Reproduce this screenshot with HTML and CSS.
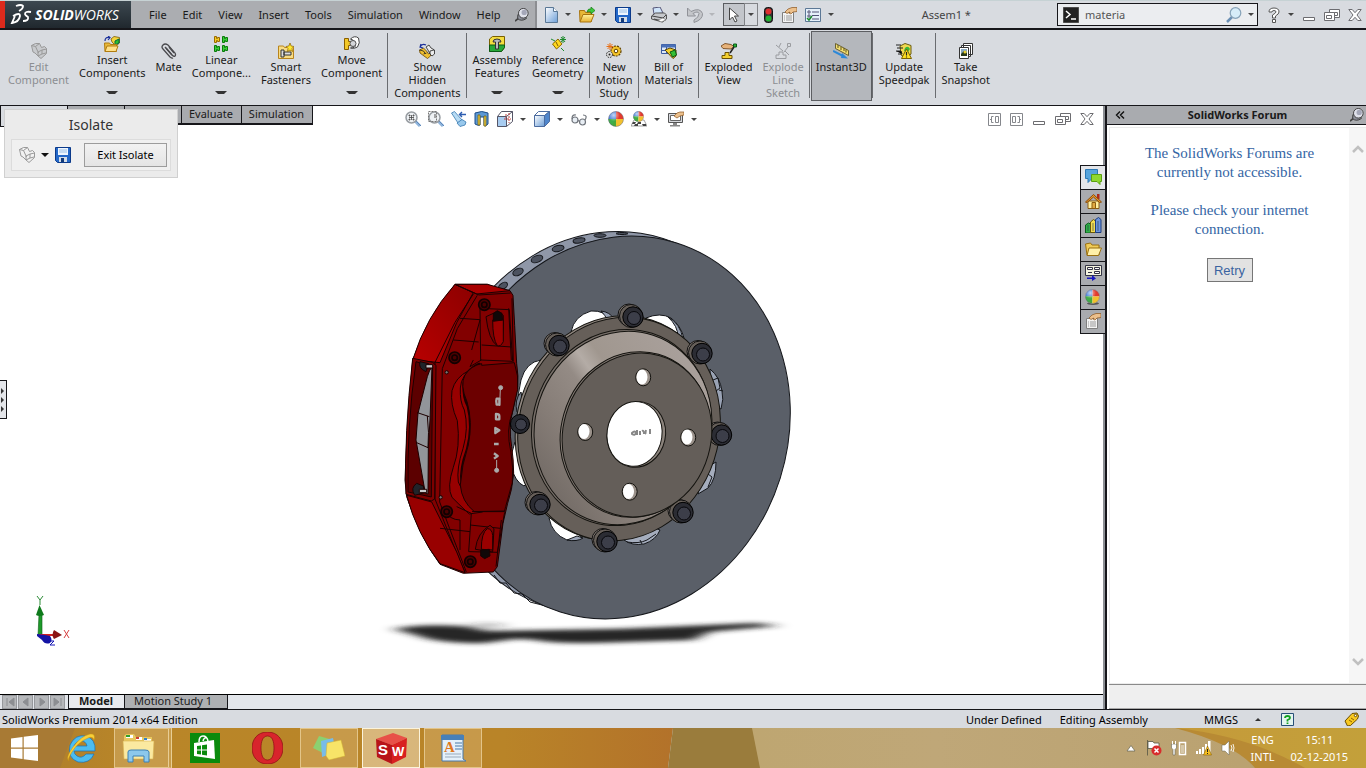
FILE: index.html
```html
<!DOCTYPE html>
<html lang="en">
<head>
  <meta charset="UTF-8" />
  <title>Assem1 - SolidWorks Premium 2014</title>
  <link rel="stylesheet" href="styles.css">
</head>
<body>

  <!-- Shared icons -->
  <svg class="defs" aria-hidden="true">
    <defs>
      <radialGradient id="gSphere" cx="35%" cy="25%" r="80%">
        <stop offset="0" stop-color="#fff" stop-opacity=".7"/><stop offset=".5" stop-color="#fff" stop-opacity="0"/>
      </radialGradient>
      <linearGradient id="gBlue" x1="0" y1="0" x2="1" y2="1">
        <stop offset="0" stop-color="#fff"/><stop offset="1" stop-color="#6d9fd8"/>
      </linearGradient>
      <linearGradient id="gGold" x1="0" y1="0" x2="0" y2="1">
        <stop offset="0" stop-color="#fff3a0"/><stop offset="1" stop-color="#e8b030"/>
      </linearGradient>
    </defs>
    <symbol id="pin" viewBox="0 0 16 16">
      <path d="M0 15l5-4" stroke="#444" stroke-width="2"/>
      <path d="M3 12q4 4 10 0l-1-3-6-5q-4 4-3 8z" fill="#8c8f9a" stroke="#333"/>
      <circle cx="9.500" cy="6" r="5.500" fill="#dfe1ea" stroke="#333"/>
      <circle cx="10.500" cy="5" r="3" fill="#a4a7b8"/>
    </symbol>
    <symbol id="floppy" viewBox="0 0 16 16">
      <path d="M.5.500h15v15h-13l-2-2z" fill="#2468c8" stroke="#0c3a8a"/>
      <path d="M3 1h10v7H3z" fill="#eef6ff"/><path d="M4 3h8M4 5h8" stroke="#9cc0e4"/>
      <path d="M4 10h8v5H4z" fill="#d4dde8"/><path d="M6 11h3v4H6z" fill="#123a7a"/>
    </symbol>
    <symbol id="hand" viewBox="0 0 16 16">
      <path d="M1.500 5.500h11v10h-11z" fill="#f4f4f4" stroke="#808080"/>
      <path d="M3 9h1M5 9h6M3 11h1M5 11h6M3 13h1M5 13h6" stroke="#999"/>
      <path d="M4 5l3-3 4-1.500h5v4l-4 .5-2 2-1.500-.5L9 5 6 6.500z" fill="#ecc08c" stroke="#8a5520" stroke-width=".7"/>
    </symbol>
    <symbol id="sphere" viewBox="0 0 16 16">
      <circle cx="8" cy="8" r="7.500" fill="#fff"/>
      <path d="M8 8V.5A7.500 7.500 0 0 0 .5 8z" fill="#3c78d8"/>
      <path d="M8 8V.5A7.500 7.500 0 0 1 15.500 8z" fill="#e23a2e"/>
      <path d="M8 8H.5A7.500 7.500 0 0 0 8 15.500z" fill="#48a83a"/>
      <path d="M8 8h7.500A7.500 7.500 0 0 1 8 15.500z" fill="#f2c12e"/>
      <path d="M8 8H.5A7.500 7.500 0 0 0 4 14.300z" fill="#3fae4a"/>
      <circle cx="8" cy="8" r="7.500" fill="url(#gSphere)" stroke="#667" stroke-width=".5"/>
    </symbol>
    <symbol id="part" viewBox="0 0 16 16">
      <path d="M.5 2.500l4-2h4l2 4 3-1 2 2v5L10 15.500 7 13l-3-3-2-1z" fill="currentColor" stroke="#999"/>
      <path d="M.5 2.500l4 1 3 6.500M4.500 3.500l4-3M7 13V9l4-2 4.500-1M11 7v4l-4 2M11 11l4-1" fill="none" stroke="#999"/>
    </symbol>
    <symbol id="win-min" viewBox="0 0 14 14">
      <path d="M1.500 9.500h11v3h-11z" fill="#fff" stroke="#6c6c70"/>
    </symbol>
    <symbol id="win-restore" viewBox="0 0 16 14">
      <path d="M5.500 1.500h10v8h-10z" fill="#fff" stroke="#6c6c70"/><path d="M7.500 4.500h6v3h-6z" fill="none" stroke="#6c6c70"/>
      <path d="M.5 4.500h10v8H.5z" fill="#fff" stroke="#6c6c70"/><path d="M2.500 7.500h5v3h-5z" fill="none" stroke="#6c6c70"/>
    </symbol>
    <symbol id="win-close" viewBox="0 0 14 14">
      <path d="M.8 1.500h3.400L7 4.700l2.800-3.200h3.400L9 7l4.200 5.500H9.800L7 9.300l-2.800 3.200H.8L5 7z" fill="#fff" stroke="#6c6c70"/>
    </symbol>
    <symbol id="lens" viewBox="0 0 16 16">
      <path d="M10 10l5 5" stroke="#8fb4dc" stroke-width="3"/><path d="M11 10l5 5" stroke="#5d88ba"/>
      <circle cx="6.500" cy="6.500" r="5.500" fill="#eef1f4" stroke="#989da2" stroke-width="1.500"/>
    </symbol>
  </svg>

  <header class="titlebar">
    <div class="logo">
      <svg width="24" height="22" viewBox="0 0 24 22" aria-hidden="true">
        <g fill="none" stroke="#fff" stroke-width="1.800">
          <path d="M7 2q5-2 7 0 0 3-4 5"/>
          <path d="M4 12q7-4 7 0-1 6-8 7l3-7"/>
          <path d="M22 8q-6-1-6 2 0 1 3 3 1 4-5 4"/>
        </g>
      </svg>
      <span class="brand"><b>SOLID</b>WORKS</span>
    </div>
    <nav class="menu">
      <a href="#">File</a><a href="#">Edit</a><a href="#">View</a><a href="#">Insert</a><a href="#">Tools</a><a href="#">Simulation</a><a href="#">Window</a><a href="#">Help</a>
      <svg class="pin" width="14" height="14"><use href="#pin"/></svg>
    </nav>
    <div class="quick">
      <button aria-label="New"><svg width="16" height="16" viewBox="0 0 16 16"><path d="M2.500.5h8l4 4v11h-12z" fill="url(#gBlue)" stroke="#5a7896"/><path d="M10.500.5v4h4" fill="#fff" stroke="#5a7896"/></svg></button><i class="arrow"></i>
      <button aria-label="Open"><svg width="16" height="16" viewBox="0 0 16 16"><path d="M.5 3.500h5l1 2h6v9H1z" fill="#e8b838" stroke="#a87410"/><path d="M4 7.500h11l-3 7.500H1z" fill="url(#gGold)" stroke="#a87410"/><path d="M8 5q1-4 4-3V0l4 3.500L12 7V5q-2-1-4 0z" fill="#3cc83c" stroke="#157a15" stroke-width=".7"/></svg></button><i class="arrow"></i>
      <button aria-label="Save"><svg width="16" height="16"><use href="#floppy"/></svg></button><i class="arrow"></i>
      <button aria-label="Print"><svg width="16" height="16" viewBox="0 0 16 16"><path d="M3 7L2 1l7-1 3 6z" fill="#cfe4fa" stroke="#557"/><path d="M.5 9l4-3h9l2 2v4l-4 3-11-3z" fill="#c6c8cc" stroke="#555"/><path d="M1 9l11 2 3-3M3 12l8 2v-2" fill="none" stroke="#444"/><path d="M7 13l5-2 3 2-5 2z" fill="#fff" stroke="#666" stroke-width=".6"/></svg></button><i class="arrow"></i>
      <button aria-label="Undo"><svg width="16" height="16" viewBox="0 0 16 16"><path d="M.5 1v8h8L6 6.500q5-3 6 0 0 4-5 6.500v2.500q9-3 8.500-9Q13 0 4 4.500z" fill="#c4c6ca" stroke="#909298"/></svg></button><i class="arrow pale"></i>
      <button class="pick" aria-label="Select"><svg width="12" height="16" viewBox="0 0 12 16"><path d="M1.500 1v12l3-3 2.500 5 2-1-2.500-5h4z" fill="#fff" stroke="#444"/></svg></button><button class="pick-more" aria-label="Select options"><i class="arrow"></i></button>
      <button aria-label="Rebuild"><svg width="10" height="16" viewBox="0 0 10 16"><rect x=".5" y=".5" width="8" height="15" rx="3" fill="#333" stroke="#111"/><circle cx="4.500" cy="4.500" r="3" fill="#e03030"/><circle cx="4.500" cy="11.500" r="3" fill="#22b032"/></svg></button>
      <button class="wide" aria-label="File properties"><svg width="16" height="16"><use href="#hand"/></svg></button>
      <button class="wide" aria-label="Options"><svg width="16" height="16" viewBox="0 0 16 16"><path d="M.5 1.500h15v13H.5z" fill="#e6f0fa" stroke="#5c7896"/><path d="M3 4h2v2H3zM3 8h2v2H3z" fill="#fff" stroke="#557"/><path d="M7 5h7M7 8.500h7M7 12h7" stroke="#557"/><path d="M2 11l2 2 3-4" fill="none" stroke="#1a8a2a" stroke-width="1.500"/></svg></button><i class="arrow"></i>
    </div>
    <div class="doc-title">Assem1 *</div>
    <div class="search">
      <svg width="16" height="16" viewBox="0 0 16 16"><path d="M0 0h16v16H0z" fill="#222" stroke="#777"/><path d="M3 4l4 3.500L3 11M8 12h5" fill="none" stroke="#fff" stroke-width="1.500"/></svg>
      <input type="text" id="search" value="materia" aria-label="Search commands" />
      <svg width="16" height="16" viewBox="0 0 16 16"><path d="M1 15l5-5" stroke="#6a8fb4" stroke-width="2.500"/><circle cx="9.500" cy="6" r="5.300" fill="#d6ecf8" stroke="#86a2b8" stroke-width="1.200"/></svg>
      <i class="arrow"></i>
    </div>
    <div class="window-controls">
      <button aria-label="Help"><svg width="12" height="16" viewBox="0 0 12 16"><path d="M1 5q0-4 5-4t5 4q0 2-3.500 4v2h-3V8Q8 6 8 5 8 3.500 6 3.500T4 5z" fill="#fff" stroke="#555"/><path d="M4.500 12.500h3v3h-3z" fill="#fff" stroke="#555"/></svg></button>
      <i class="arrow"></i>
      <button aria-label="Minimize"><svg width="14" height="14"><use href="#win-min"/></svg></button>
      <button aria-label="Restore"><svg width="16" height="14"><use href="#win-restore"/></svg></button>
      <button aria-label="Close"><svg width="14" height="14"><use href="#win-close"/></svg></button>
    </div>
  </header>

  <div class="ribbon">
    <button class="tool" disabled><svg class="gray" width="16" height="16"><use href="#part"/></svg>Edit<br>Component</button>
    <button class="tool drop"><svg width="16" height="16" viewBox="0 0 16 16"><path d="M7 3l3-2.500 5.500 1V7L12 10 8 6z" fill="#f3d43a" stroke="#7a5a00" stroke-width=".8"/><path d="M11 5l4-2v4l-4 2z" fill="#2fc02f" stroke="#064"/><path d="M.5 7h5l1 1.500h6v7H1z" fill="#e9b93a" stroke="#b07c10"/><path d="M3 10h11l-2 5.500H1z" fill="#ffe088" stroke="#b07c10"/><path d="M1 5q0-4 4-3.500M4 0l2 1.500L4 4" fill="none" stroke="#1a2f9a" stroke-width="1.200"/></svg>Insert<br>Components</button>
    <button class="tool"><svg width="16" height="16" viewBox="0 0 16 16"><g fill="none" stroke="#4a4a4e" stroke-width="1.300"><path d="M5 5l6 7q2 2 3 1t0-3L7 2Q4 0 2 2t0 4l7 8q2 1.500 3 1"/><path d="M4 4l7 8M8 4l5 6"/></g></svg>Mate</button>
    <button class="tool drop"><svg width="16" height="16" viewBox="0 0 16 16"><g fill="#38d038" stroke="#0a7a0a"><path id="jig" d="M9.500.500h2v2h1v-1h2v4h-2v-1h-1v2h-2z"/><use href="#jig" y="9"/><use href="#jig" x="-8" y="9"/><path d="M1.500.500h2v2h1v-1h2v4h-2v-1h-1v2h-2z" fill="#f4cc20" stroke="#9a6a00"/></g></svg>Linear<br>Compone...</button>
    <button class="tool"><svg width="16" height="16" viewBox="0 0 16 16"><path d="M.5 3h5l1 1.500h9v11H.5z" fill="#f8dc84" stroke="#b8841c"/><path d="M3 7h3v7H3zM6 9h7v3H6z" fill="#ddd" stroke="#333"/><path d="M12 0l1.200 3 2.800.5-2 2 .5 3-2.500-1.500L9.500 8.500l.5-3-2-2 2.800-.5z" fill="#ffe830" stroke="#8a5c00" stroke-width=".7"/></svg>Smart<br>Fasteners</button>
    <button class="tool drop"><svg width="16" height="16" viewBox="0 0 16 16"><path d="M.5 2.500h4v3h3v4h-3v4h-4z" fill="#f4c828" stroke="#8a5e00"/><path d="M6.500 3q4-4 8-1 2 5-1 9-3 2-7 1 5 0 5-3 1-4-5-6z" fill="#fff" stroke="#444"/><circle cx="9" cy="7.500" r="3" fill="#d4d6da" stroke="#555"/></svg>Move<br>Component</button>
    <hr>
    <button class="tool"><svg width="16" height="16" viewBox="0 0 16 16"><path d="M.5 7l4-2 3 3 2 3 2-1v3l-3 2.500L5 13 1 10z" fill="#f0c030" stroke="#6b4800" stroke-width=".8"/><path d="M7 4l3-2 2 3 3.500 2v4L13 13l-2-2-2-4z" fill="#ececec" stroke="#222" stroke-width=".8"/><path d="M.5 7l4 1 2 3M11 8l4-1M11 8v3M4.500 11l3-1" fill="none" stroke="#222" stroke-width=".8"/><path d="M1 4q2-4 6-2M2 1L1 4l3 1" fill="none" stroke="#1a2f9a" stroke-width="1.200"/></svg>Show<br>Hidden<br>Components</button>
    <hr>
    <button class="tool drop"><svg width="16" height="16" viewBox="0 0 16 16"><path d="M.5 3l3-2.500h12v11l-3 4H.5z" fill="#f4dc40" stroke="#7a6000"/><path d="M.5 9h15v2.500l-3 4H.5z" fill="#28a838" stroke="#0a5a16"/><path d="M4 6q0-3 4-3t4 3H9.500v7h-3V6z" fill="#b8bac0" stroke="#333"/></svg>Assembly<br>Features</button>
    <button class="tool drop"><svg width="16" height="16" viewBox="0 0 16 16"><path d="M2.500 8L8 3l4 5-5.500 5z" fill="#ffd820" stroke="#8a6a00"/><path d="M1 3l4 2M11 12l3 3M10 3.500h6M13 0v7M11 1l4 5M15 1l-4 5" stroke="#1c8a2c"/><path d="M6 6l2 4" stroke="#805c00"/></svg>Reference<br>Geometry</button>
    <hr>
    <button class="tool"><svg width="16" height="16" viewBox="0 0 16 16"><circle cx="10" cy="8" r="5" fill="#f4c428" stroke="#5e4000" stroke-width="1.200" stroke-dasharray="2 1"/><circle cx="10" cy="8" r="1.800" fill="#fff" stroke="#5e4000"/><circle cx="3.500" cy="11.500" r="3" fill="#ddd" stroke="#222" stroke-dasharray="1.500 1"/><circle cx="3.500" cy="11.500" r="1" fill="#222"/><path d="M4 0v7M.5 3.500h7M1.500 1l5 5M6.500 1l-5 5" stroke="#e87018"/></svg>New<br>Motion<br>Study</button>
    <hr>
    <button class="tool"><svg width="16" height="16" viewBox="0 0 16 16"><path d="M.5 1.500h14v9H.5z" fill="#dce8fa" stroke="#3c5ca0"/><path d="M.5 1.500h14v3H.5z" fill="#4a70b8"/><path d="M1 7.500h5M5.500 4v6" stroke="#3c5ca0"/><path d="M4 7l5-2 6 2v6l-3 2.500z" fill="#f4d030" stroke="#5a4400"/><path d="M9 9l5-2 1.500 5-4 2z" fill="#34c034" stroke="#0a5a16"/></svg>Bill of<br>Materials</button>
    <hr>
    <button class="tool"><svg width="16" height="16" viewBox="0 0 16 16"><path d="M0 3l4-2.500 6 1 3 2-3 2.500-8-.5z" fill="#e6b27a" stroke="#6b3e10" stroke-width=".8"/><path d="M12.500 1h3v3h-3z" fill="#28b438" stroke="#0a5a16"/><path d="M13 4l-4 6" stroke="#222" stroke-width="1.500"/><path d="M4 9.500h4v3h3v3H1v-3h3z" fill="#f4d030" stroke="#6b5000"/></svg>Exploded<br>View</button>
    <button class="tool" disabled><svg width="16" height="16" viewBox="0 0 16 16"><g fill="none" stroke="#9a9ca0"><path d="M4 9h4v3h3v3.500H1V12h3zM12.500.5h3v3h-3zM13 4L9 9M1 2l7 6M6 0l-2 4M10 8l4 4"/></g></svg>Explode<br>Line<br>Sketch</button>
    <hr>
    <button class="tool pressed"><svg width="16" height="16" viewBox="0 0 16 16"><path d="M2.500.5l13 7v5l-13-7z" fill="#f4e070" stroke="#6a6030"/><path d="M5 2v3M8 4v3M11 5v3M13 6.500v3" stroke="#5a5020"/><path d="M0 8l10 5" stroke="#2c88d8" stroke-width="2"/><path d="M9 10l6 5.500-7-.5z" fill="#2c88d8"/></svg>Instant3D</button>
    <hr>
    <button class="tool"><svg width="16" height="16" viewBox="0 0 16 16"><path d="M4 3l5-2.500 6 2V11l-5 4-5-3z" fill="#f0d850" stroke="#6a5c10"/><path d="M9 5q3-3 5 1l-2 3-4-1z" fill="#38b838"/><path d="M0 2h5M1 5h6M0 8h5l1 3M2 11h4" stroke="#222"/><path d="M10.500 6l5 9.500h-10z" fill="#ffe020" stroke="#7a6000"/><path d="M10.500 9v3.500M10.500 13.500v1" stroke="#222" stroke-width="1.200"/></svg>Update<br>Speedpak</button>
    <hr>
    <button class="tool"><svg width="16" height="16" viewBox="0 0 16 16"><path d="M5.500.5h9v11h-9zM3.500 2.500h9v11h-9z" fill="#fff" stroke="#333"/><path d="M1.500 4.500h9v11h-9z" fill="#fff" stroke="#333"/><path d="M3 6h6v7H3z" fill="#88a8c0"/><path d="M3 11l3-3 3 2v3H3z" fill="#2a3a1a"/><circle cx="7" cy="9" r="1.500" fill="#e8d030"/></svg>Take<br>Snapshot</button>
  </div>

  <main>
    <section class="workspace">
      <div class="viewport">
        <!-- Brake disc, hub and caliper -->
        <svg class="model" width="500" height="500" viewBox="302 150 500 500" role="img" aria-label="Brake assembly">
          <defs>
            <filter id="soft" x="-20%" y="-150%" width="140%" height="400%"><feGaussianBlur stdDeviation="22 6"/></filter>
            <linearGradient id="cone" x1="0" y1="0.9" x2="0.6" y2="0">
              <stop offset="0" stop-color="#6c6560"/><stop offset=".3" stop-color="#857c76"/><stop offset=".52" stop-color="#948b85"/>
              <stop offset=".6" stop-color="#b4aca6"/><stop offset=".68" stop-color="#a0978f"/><stop offset="1" stop-color="#a89f9a"/>
            </linearGradient>
            <linearGradient id="redTop" x1="0" y1="1" x2="1" y2="0">
              <stop offset="0" stop-color="#b80000"/><stop offset="1" stop-color="#8c0000"/>
            </linearGradient>
            <g id="bolt">
              <circle cx="-4" cy="-2" r="11" fill="#857c75" stroke="#111"/>
              <circle cx="-2" cy="-1" r="11.500" fill="#665f59" stroke="#111"/>
              <circle r="10.200" fill="#2b2c33" stroke="#000"/>
              <circle cx="1" cy="1" r="6.500" fill="#3c3e49" stroke="#08080c"/>
            </g>
          </defs>

          <g transform="translate(350 560) scale(.3333)">
            <g filter="url(#soft)" fill="#262626">
              <path d="M130 207q80-18 215-8l70 14 400-7 400-17 75 8-210 18-50 25-270 8q-160 4-200-8l-60-4-100 14q-140 0-200-24z"/>
              <path d="M340 194q80-10 140 2l-60 6z" opacity=".4"/>
            </g>
          </g>

          <!-- rotor -->
          <g stroke="#14161a">
            <ellipse cx="605" cy="422.500" rx="169.500" ry="193" transform="rotate(17.500 605 422.500)" fill="#8f97a8"/>
            <g fill="#4c525f">
              <ellipse cx="503" cy="286" rx="5" ry="3" transform="rotate(-35 503 286)"/>
              <ellipse cx="518" cy="272" rx="5.500" ry="3.300" transform="rotate(-25 518 272)"/>
              <ellipse cx="537" cy="259" rx="6" ry="3.300" transform="rotate(-20 537 259)"/>
              <ellipse cx="558" cy="248.500" rx="6" ry="3" transform="rotate(-12 558 248)"/>
              <ellipse cx="579" cy="240.500" rx="6" ry="2.500" transform="rotate(-8 579 240)"/>
              <ellipse cx="600" cy="235.500" rx="6" ry="1.800"/>
              <ellipse cx="622" cy="233.500" rx="6" ry="1"/>
            </g>
            <path d="M494 575l6 8 6 0 8 10 8 1 8 8 16 4" fill="none"/>
            <ellipse cx="618.500" cy="427.500" rx="169.500" ry="193.500" transform="rotate(17.500 618.500 427.500)" fill="#5a5f68"/>
          </g>

          <!-- windows behind the hub -->
          <g stroke="#14161a" fill="#fff">
            <path d="M571 332q3-16 20-21 14-1 20 10v16h-40z"/>
            <path d="M601 311q9 1 13 8l-6 2q-3-6-7-10z" fill="#9aa3b5"/>
            <path d="M646 318q14-6 25 0 10 8 13 20l-20 8z"/>
            <path d="M668 317q12 6 15 22l-5-2q0-11-10-20z" fill="#9aa3b5"/>
            <path d="M541 360q-15 2-20 20-4 14-2 26l12 6z"/>
            <path d="M521 392q-7 8-4 20l8 4z" fill="#78818f"/>
            <path d="M515 442q-5 12-4 24 4 16 13 20l6-6z"/>
            <path d="M549 518q3 16 18 22 8 2 14-3l-10-20z"/>
            <path d="M567 540q10 2 16-2l-6-2z" fill="#9aa3b5"/>
            <path d="M624 540q8 6 20 4 12-4 16-14l-20-8z" fill="#a5adbd"/>
            <path d="M627 542q12 2 20-2l9-6M640 540l2 4" fill="none"/>
            <path d="M710 369q10 8 12 22 2 8-1 18l-10-4z" fill="#9aa3b5"/>
            <path d="M713 380l5-2 2 10-4 3M719 390l4 1" fill="none"/>
            <path d="M716 462q0 18-8 26l-10 6 4-24z" fill="#a5adbd"/>
            <path d="M708 474l4 3-4 10" fill="none"/>
          </g>

          <!-- flange with bolts -->
          <g stroke="#14130f">
            <ellipse cx="616.500" cy="428" rx="100" ry="113.500" transform="rotate(18 616.500 428)" fill="#8f867f"/>
            <ellipse cx="619" cy="429" rx="100" ry="113" transform="rotate(18 619 429)" fill="#665f59"/>
            <use href="#bolt" x="633" y="317"/><use href="#bolt" x="702" y="353.500"/><use href="#bolt" x="721.500" y="435"/>
            <use href="#bolt" x="683" y="512.500"/><use href="#bolt" x="607" y="541.500"/><use href="#bolt" x="540" y="504.500"/>
            <use href="#bolt" x="559" y="345.500"/>
            <ellipse cx="621.500" cy="427.500" rx="89" ry="99" transform="rotate(18 621.500 427.500)" fill="#776f69"/>
            <ellipse cx="623" cy="428" rx="88" ry="97.500" transform="rotate(18 623 428)" fill="url(#cone)"/>
            <ellipse cx="635.500" cy="434.500" rx="74.500" ry="83.500" transform="rotate(16 635.500 434.500)" fill="#857c76"/>
            <ellipse cx="637" cy="435" rx="74" ry="82.500" transform="rotate(16 637 435)" fill="#645e59"/>
            <ellipse cx="636.500" cy="434.300" rx="29" ry="33" transform="rotate(12 636 434)" fill="#8b837c"/>
            <ellipse cx="634.500" cy="433.800" rx="27.500" ry="32.500" transform="rotate(8 634 434)" fill="#fff"/>
            <g fill="#9a918a">
              <ellipse cx="643.200" cy="377.300" rx="7.500" ry="8.500"/><ellipse cx="585.200" cy="432" rx="7.500" ry="8.500"/>
              <ellipse cx="688.200" cy="437.500" rx="7.500" ry="8.500"/><ellipse cx="629.700" cy="491.700" rx="7.500" ry="8.500"/>
            </g>
            <g fill="#fff" stroke="none">
              <ellipse cx="642" cy="377" rx="5.500" ry="7.500"/><ellipse cx="584" cy="431.500" rx="5.500" ry="7.500"/>
              <ellipse cx="687" cy="437" rx="5.500" ry="7.500"/><ellipse cx="628.500" cy="491.500" rx="5.500" ry="7.500"/>
            </g>
            <path d="M632 433q3-3 4 0-1 3-4 1zM637 430v5M640 431v4M642 431q2-1 2 3M646 430q-1 3 0 4M650 429v5" stroke="#888" stroke-width="2" fill="none"/>
          </g>

          <!-- caliper -->
          <g transform="translate(390 220) scale(.3333)" stroke="#1c0000" stroke-width="3" stroke-linejoin="round">
            <path d="M195 193h97l26 12 42 7 9 14 5 90 6 114q6 40 3 70l-14 70q-14 50-4 110 6 40 6 80-4 50-18 90l-14 60-17 130-12 16-90 4-70-27q-60-80-100-203l-5-50 5-120 18-240q40-110 127-227z" fill="#820000"/>
            <path d="M195 193l55 25-50 90-50 120-82-8q40-130 127-227z" fill="url(#redTop)"/>
            <path d="M195 193h97l68 19-100 10z" fill="#a80000"/>
            <path d="M195 193l72 32 95-6M250 222l-55 85-60 120v410l60 150 30 70M262 226l-60 100-45 120-8 400 30 80 50 130" fill="none"/>
            <path d="M50 826l75 20 75 150 25 62-75-27q-70-90-100-205z" fill="#980000"/>
            <path d="M68 415l60 12 10 10-4 400-10 6-76-20q-6-180 20-408z" fill="#7c0000"/>
            <path d="M78 425l50 16-4 390-70-15q-4-200 24-391z" fill="#5c0000"/>
            <path d="M126 440q-8 10-14 30l-28 110-6 80 28 160 8 2 1-140 5-82z" fill="#92959a"/>
            <path d="M82 578l36 12M80 668l36 16M112 588q6 50 2 96" fill="none"/>
            <path d="M90 425q-6 20 18 30l8-24zM80 790q-20 14-6 36l30-8-4-20z" fill="#20242a"/>
            <path d="M108 434h20v10h-20zM88 808h22v10H88z" fill="#c8cacd"/>

            <!-- inner lobed cover -->
            <path d="M270 430l-34 22q-40 20-50 60-6 40 16 90 10 80-12 140-20 60-4 90 40 40 52 50l40-6z" fill="#980000"/>
            <path d="M270 432q-46 20-48 60-2 40 12 66 16 60-2 130-22 60-16 100 16 46 38 70" fill="none" stroke-width="9"/>
            <path d="M255 440q-42 24-44 64-2 40 12 66 14 54-4 116-20 60-14 100 16 40 36 62" fill="none"/>
            <path d="M275 436l98-8q14 40 10 80l-16 70q-20 50-4 120 8 46 4 90l-20 72-4 15h-90q-38-30-42-80 4-60 24-120 14-70-4-130-22-50-6-80 18-28 50-34z" fill="#6c0000"/>
            <path d="M270 265l88 4 10 155-96-4zM275 375l90 6M210 295l60 4M190 360l76 6M245 390l25-90M250 420l-10 20 34-20" fill="none"/>
            <path d="M288 290q8 70 34 88 22-20 18-92l-16-12z" fill="#7a0000"/>
            <path d="M308 300h32v65q-8 16-18 12-14-20-14-77z" fill="#9a0000"/>
            <path d="M310 280l12-8 14 8 2 20-28 4z" fill="#100808"/>
            <path d="M246 875l100-2M244 880l-8 115 86 2 22-120M240 915l90 10M150 925l90 10M200 860l44 20M160 870q20 30 50 30v90" fill="none"/>
            <path d="M256 988q6-50 44-72l12 10-4 70z" fill="#7a0000"/>
            <path d="M274 988q0-50 18-62 14 0 16 20v44z" fill="#9a0000"/>
            <path d="M272 990l26-2 2 20-16 8-12-8z" fill="#100808"/>
            <path d="M366 235l4 190M356 265l8 155M334 900l-16 140" fill="none"/>

            <!-- screws -->
            <g fill="#4a0000" stroke="#120000" stroke-width="5">
              <circle cx="283" cy="254" r="17"/><circle cx="194" cy="413" r="17"/><circle cx="170" cy="875" r="17"/><circle cx="241" cy="1025" r="17"/>
              <circle cx="283" cy="254" r="8"/><circle cx="194" cy="413" r="8"/><circle cx="170" cy="875" r="8"/><circle cx="241" cy="1025" r="8"/>
            </g>
            <circle cx="170" cy="457" r="5" fill="#777"/><circle cx="152" cy="832" r="5" fill="#777"/>
            <!-- badge on the cover -->
            <g stroke="#aaa" fill="#aaa">
              <circle cx="332" cy="503" r="6"/><circle cx="320" cy="751" r="6"/>
              <path d="M331 508l-2 50M320 746v-26"/>
              <path d="M320 536h8v18h-8q-3-10 0-18zM318 582q10 0 10 6v10h-10zM316 624l12 7-12 8zM312 672h14M312 700l11 8-11 8" fill="none" stroke-width="7"/>
            </g>
          </g>
          <circle cx="520" cy="424" r="9.500" fill="#25272e" stroke="#000"/><circle cx="521" cy="424.500" r="5.500" fill="#3c3e49" stroke="#08080c"/>
        </svg>

        <nav class="command-tabs" aria-label="Command tabs">
          <button class="active" aria-label="Assembly"></button><button aria-label="Layout"></button><button aria-label="Sketch"></button><button>Evaluate</button><button>Simulation</button>
        </nav>

        <div class="isolate">
          <h2>Isolate</h2>
          <div class="isolate-row">
            <svg class="white" width="16" height="16"><use href="#part"/></svg><i class="arrow big"></i>
            <svg width="16" height="16"><use href="#floppy"/></svg>
            <button>Exit Isolate</button>
          </div>
        </div>

        <div class="heads-up">
          <svg width="16" height="16" viewBox="0 0 16 16"><use href="#lens"/><path d="M4 6.500h5M6.500 4v5M4 4h1v1H4zM8 4h1v1H8zM4 8h1v1H4zM8 8h1v1H8z" stroke="#444" fill="none" stroke-width=".8"/></svg>
          <svg width="16" height="16" viewBox="0 0 16 16"><use href="#lens"/><path d="M.5.500h8v10h-8z" fill="none" stroke="#777" stroke-dasharray="2 1"/><path d="M7 3v4" stroke="#555"/></svg>
          <svg width="16" height="16" viewBox="0 0 16 16"><path d="M.5 2l3-1.500L11 9l-4 3z" fill="#b8dcf4" stroke="#3a7ab0" stroke-width=".8"/><path d="M6 12l5-3.500 4 2.500-1 3-5 1.500z" fill="#98c8ec" stroke="#3a7ab0" stroke-width=".8"/><path d="M9 3.500h6M11 1L8.500 3.500 11 6" fill="none" stroke="#2c5cb0" stroke-width="1.400"/></svg>
          <svg width="16" height="16" viewBox="0 0 16 16"><path d="M1 2q7-3 13 0v11q-3 3-4 1.500V6H6v8q-2 1-5-1z" fill="#5c98d4" stroke="#1c4c88"/><path d="M4 4h2v10H4zM10 5h2v10h-2z" fill="#f4d448" stroke="#7a6410" stroke-width=".8"/></svg>
          <svg width="16" height="16" viewBox="0 0 16 16"><path d="M.5 5.500h9v10h-9z" fill="#a8ccf0" stroke="#556"/><path d="M.5 5.500l4-5h11v10l-6 5M9.500 5.500l6-5" fill="none" stroke="#556"/><path d="M9 3v4M12 2v10M7 8h7" stroke="#c04040" stroke-dasharray="2 1"/></svg>
          <i class="arrow"></i>
          <svg width="16" height="16" viewBox="0 0 16 16"><path d="M.5 4.500h10v11H.5z" fill="url(#gBlue)" stroke="#4c6ca0"/><path d="M.5 4.500l4-4h11l-5 4z" fill="#fff" stroke="#4c6ca0"/><path d="M10.500 4.500l5-4v10l-5 5z" fill="#4f86cc" stroke="#4c6ca0"/></svg>
          <i class="arrow"></i>
          <svg width="16" height="16" viewBox="0 0 16 16"><g fill="#e8eef4" stroke="#70757c" stroke-width="1.200"><circle cx="4" cy="9" r="3"/><circle cx="11.500" cy="11" r="3"/><path d="M7 9.500l2 1M1 8q0-5 4-4M14 9q3-5-2-5" fill="none"/></g></svg>
          <i class="arrow"></i>
          <svg width="16" height="16"><use href="#sphere"/></svg>
          <svg width="16" height="16" viewBox="0 0 16 16"><path d="M3 9h10l3 6H0z" fill="#fff" stroke="#666" stroke-width=".6"/><path d="M2 11h3l-1 2H1zM7 11h3v2H6zM11 13h4v2h-3zM4 13h3v2H3z" fill="#444"/><use href="#sphere" x="2" width="11" height="11"/></svg>
          <i class="arrow"></i>
          <svg width="16" height="16" viewBox="0 0 16 16"><path d="M.5 2.500h14v9H.5z" fill="#d8dade" stroke="#555"/><path d="M2.500 4.500h10v5h-10z" fill="#fff" stroke="#666"/><path d="M5 12h4v2h3v1.500H2V14h3z" fill="#888"/><path d="M6 5l3-3 3-1h4v3l-4 1-3 2z" fill="#ecc08c" stroke="#8a5520" stroke-width=".7"/></svg>
          <i class="arrow"></i>
        </div>

        <div class="view-controls">
          <button aria-label="Previous pane"><svg width="13" height="13" viewBox="0 0 13 13"><path d="M.5.500h12v12H.5z" fill="#fff" stroke="#85878c"/><path d="M5.500 3.500h-2v6h2M2 6.500h2M7.500 3.500h3v6h-3z" fill="none" stroke="#85878c"/></svg></button>
          <button aria-label="Next pane"><svg width="13" height="13" viewBox="0 0 13 13"><path d="M.5.500h12v12H.5z" fill="#fff" stroke="#85878c"/><path d="M7.500 3.500h2v6h-2M9 6.500h2M2.500 3.500h3v6h-3z" fill="none" stroke="#85878c"/></svg></button>
          <button aria-label="Minimize view"><svg width="14" height="14"><use href="#win-min"/></svg></button>
          <button aria-label="Restore view"><svg width="16" height="14"><use href="#win-restore"/></svg></button>
          <button aria-label="Close view"><svg width="14" height="14"><use href="#win-close"/></svg></button>
        </div>

        <button class="tree-handle" aria-label="Show feature tree"><i></i><i></i><i></i></button>

        <svg class="triad" width="42" height="54" viewBox="0 0 42 54" aria-hidden="true">
          <path d="M9 20h3v22H8z" fill="#1d9a2a" stroke="#0c5a14" stroke-width=".6"/><path d="M9.500 11l4.500 10q-4.500 2-8 0z" fill="#0f7a1c"/>
          <path d="M9 40h17v2H9z" fill="#d02020"/><path d="M24 36l8 5-8 4q-3-4 0-9z" fill="#8a1414"/>
          <path d="M7 40l8 1 5 1q3 4 0 7-5 2-8-3l-5-4z" fill="#1414a4"/>
          <path d="M7 2l3 4 3-4M10 6v5" fill="none" stroke="#2a8a34"/>
          <path d="M34 36l5 8M39 36l-5 8" stroke="#d84040"/>
          <path d="M19 47h5l-4 4h5" stroke="#1414b4" fill="none"/>
        </svg>

        <nav class="pane-tabs" aria-label="Task pane">
          <button class="active" aria-label="Forum"><svg width="17" height="16" viewBox="0 0 17 16"><path d="M.5.500h12v9H7l-4 4v-4H.5z" fill="#56a4dc" stroke="#2c78b4"/><path d="M6.500 5.500h10v7H15v3l-3-3H6.500z" fill="#90d830" stroke="#5aa010"/></svg></button>
          <button aria-label="Resources"><svg width="17" height="16" viewBox="0 0 17 16"><path d="M12 1h2.500v5H12z" fill="#b02818"/><path d="M3 8h11v7.500H3z" fill="#fff0a0" stroke="#8a5c10"/><path d="M.5 9l8-7.500 8 7.500-2 .5-6-5.500L2 9.500z" fill="#e89828" stroke="#8a4c08"/><path d="M7 9.500h3.500v6H7z" fill="#e0a840" stroke="#8a5c10"/></svg></button>
          <button aria-label="Design library"><svg width="17" height="16" viewBox="0 0 17 16"><path d="M.5 8l3-2 2 1v9H.5z" fill="#30b048" stroke="#0a5a1c"/><path d="M5.500 5l3-2.500 2 1.500v11.500h-5z" fill="#f4dc50" stroke="#6a5808"/><path d="M10.500 2.500l3-2 2.500 2v13h-5.500z" fill="#6c94dc" stroke="#1c3c80"/><path d="M3 8v6M8 6v8M13 4v10" stroke="#234" stroke-width=".6"/></svg></button>
          <button aria-label="File explorer"><svg width="17" height="16" viewBox="0 0 17 16"><path d="M.5 3l5-1 1.500 2h7v10H2z" fill="#f0cc58" stroke="#9a7010"/><path d="M4 7h12.500l-3 7.500H2z" fill="#fff0a8" stroke="#9a7010"/></svg></button>
          <button aria-label="View palette"><svg width="17" height="16" viewBox="0 0 17 16"><path d="M.5.500h16v10H.5z" fill="#f4f4e0" stroke="#334"/><path d="M2.500 2.500h5v2h-5zM9.500 2.500h5v2h-5zM3 7.500h4M9.500 6.500h5v2h-5z" fill="#fff" stroke="#334"/><path d="M2 12.500h5V10l4 3.500L7 16v-2H2z" fill="#1818c0"/></svg></button>
          <button aria-label="Appearances"><svg width="17" height="16" viewBox="0 0 17 16"><ellipse cx="8" cy="14.500" rx="6" ry="1.500" fill="#555"/><use href="#sphere" width="15" height="15"/></svg></button>
          <button aria-label="Custom properties"><svg width="16" height="16"><use href="#hand"/></svg></button>
        </nav>
      </div>

      <div class="sheet-tabs">
        <button class="nav" aria-label="First" disabled><svg width="10" height="10"><path d="M2 1v8M9 1v8L4 5z"/></svg></button>
        <button class="nav" aria-label="Previous" disabled><svg width="10" height="10"><path d="M7 1v8L2 5z"/></svg></button>
        <button class="nav" aria-label="Next" disabled><svg width="10" height="10"><path d="M3 1v8l5-4z"/></svg></button>
        <button class="nav" aria-label="Last" disabled><svg width="10" height="10"><path d="M8 1v8M1 1v8l5-4z"/></svg></button>
        <button class="sheet active">Model</button>
        <button class="sheet">Motion Study 1</button>
      </div>
    </section>

    <aside class="forum">
      <div class="forum-head">
        <svg width="10" height="8" viewBox="0 0 10 8"><path d="M5 .5L1.500 4 5 7.500M9 .5L5.500 4 9 7.500" fill="none" stroke="#111" stroke-width="1.400"/></svg>
        <h2>SolidWorks Forum</h2>
        <svg width="14" height="14"><use href="#pin"/></svg>
      </div>
      <div class="forum-body">
        <div class="forum-text">
          <p>The SolidWorks Forums are currently not accessible.</p>
          <p>Please check your internet connection.</p>
          <button>Retry</button>
        </div>
        <div class="scroll">
          <svg width="12" height="8" viewBox="0 0 12 8"><path d="M1 7l5-5 5 5" fill="none" stroke="#c0c0c0" stroke-width="2.500"/></svg>
          <svg width="12" height="8" viewBox="0 0 12 8"><path d="M1 1l5 5 5-5" fill="none" stroke="#c0c0c0" stroke-width="2.500"/></svg>
        </div>
      </div>
      <div class="forum-foot"></div>
    </aside>
  </main>

  <div class="statusbar">
    <span class="edition">SolidWorks Premium 2014 x64 Edition</span>
    <span>Under Defined</span>
    <span class="mode">Editing Assembly</span>
    <span>MMGS</span>
    <i class="arrow up"></i>
    <svg class="help" width="13" height="13" viewBox="0 0 13 13"><path d="M.5.500h12v12H.5z" fill="#e4f4f0" stroke="#285078"/><path d="M4 5q0-2 2.500-2T9 5q0 1-2.500 2v1.500M6.500 9.500V11" fill="none" stroke="#12a020" stroke-width="1.800"/></svg>
    <svg class="tag" width="15" height="14" viewBox="0 0 15 14"><path d="M1 9l7-7.500 5-.5 1.500 3-1 3-7 6.500-3 .5z" fill="#f8c820" stroke="#6a4c00"/><circle cx="11.500" cy="3.500" r="1.200" fill="#fff" stroke="#6a4c00"/><path d="M5 8l3 2M7 6l3 2" stroke="#8a6400"/></svg>
  </div>

  <footer class="taskbar">
    <svg class="wallpaper" viewBox="0 0 1366 40" preserveAspectRatio="none" aria-hidden="true">
      <defs>
        <linearGradient id="wall"><stop offset="0" stop-color="#ab7c2e"/><stop offset=".2" stop-color="#b98628"/><stop offset=".75" stop-color="#b98428"/><stop offset="1" stop-color="#b3722a"/></linearGradient>
        <linearGradient id="sand"><stop offset="0" stop-color="#bea671"/><stop offset=".3" stop-color="#bfa778"/><stop offset="1" stop-color="#b8a06e"/></linearGradient>
        <linearGradient id="sun"><stop offset="0" stop-color="#c59a3a"/><stop offset="1" stop-color="#c3a03a"/></linearGradient>
      </defs>
      <path d="M0 0h673l-5 40H0z" fill="url(#wall)"/><path d="M0 0h75L60 40H0z" fill="#a87a34"/>
      <path d="M673 0h80l8 40h-93z" fill="#9a7c3c"/>
      <path d="M752 0h614v40H760z" fill="url(#sand)"/>
      <path d="M1175 0h191v40h-80q-30-26-111-40z" fill="url(#sun)"/>
      <path d="M1175 0q75 8 130 40h-50q-20-24-80-40z" fill="#b88a34"/>
    </svg>
    <nav class="apps">
      <a href="#" aria-label="Start"><svg width="27" height="26" viewBox="0 0 27 26"><path d="M0 3.500L11.500 2v10.500H0zM12.700 1.700L27 0v12.500H12.700zM0 13.700h11.500V24L0 22.500zM12.700 13.700H27V26l-14.300-1.800z" fill="#fff"/></svg></a>
      <a href="#" aria-label="Internet Explorer"><svg width="31" height="31" viewBox="0 0 31 31"><path d="M8 18h21q1-12-9-15Q9 1 4 12q-3 13 8 17 12 2 16-8h-8q-4 5-9 2-3-2-3-5zm0-5q2-5 7-5t6 5z" fill="#4cbcf0" stroke="#1a70b4" stroke-width=".7" fill-rule="evenodd"/><path d="M3 28q-4-3 4-14T24 1q6-1 4 6-1-4-6-2Q12 9 6 19q-5 8-3 9z" fill="#f8d038" stroke="#c89010" stroke-width=".5"/></svg></a>
      <a href="#" class="open stack" aria-label="File Explorer"><svg width="33" height="30" viewBox="0 0 33 30"><path d="M2 3l2-2h8l2 3h16v20H2z" fill="#e8c860"/><path d="M4 2h7v3H4zM14 4h6v3h-6zM22 6h7v2h-7z" fill="#fff"/><path d="M4 2h4v2H4z" fill="#30a030"/><path d="M14 4h3v2h-3z" fill="#d04030"/><path d="M22 5h3v2h-3z" fill="#3080c8"/><path d="M1 8h31l-1 18H2z" fill="#fbe9a0" stroke="#d8b450" stroke-width=".6"/><path d="M6 29V19q0-2 3-2h14q4 0 4 2v10h-5v-6H11v6z" fill="#8cc8ec" stroke="#3c80b4"/></svg></a>
      <a href="#" aria-label="Store"><svg width="30" height="30" viewBox="0 0 30 30"><path d="M0 0h30v30H0z" fill="#0a8a0c"/><path d="M4 10l20-3 1 19-21-3z" fill="#fff"/><path d="M9 9q0-6 4-6t5 5M13 8q1-4 4-3" fill="none" stroke="#fff" stroke-width="1.500"/><path d="M7 13l4-.5v4H7zM12 12.300l5-.7v5h-5zM7 17.500h4v4L7 21zM12 17.500h5v5l-5-.7z" fill="#0a8a0c"/></svg></a>
      <a href="#" aria-label="Opera"><svg width="31" height="32" viewBox="0 0 31 32"><path d="M15.500 0C5 0 0 8 0 16s5 16 15.500 16S31 24 31 16 26 0 15.500 0zm0 4c5 0 6.500 6 6.500 12s-1.500 12-6.500 12S9 22 9 16s1.500-12 6.500-12z" fill="#d8242c" stroke="#8a0c14" stroke-width=".7" fill-rule="evenodd"/></svg></a>
      <a href="#" class="open" aria-label="Sticky Notes"><svg width="32" height="26" viewBox="0 0 32 26"><path d="M6 1l14 4-4 16L0 13z" fill="#8cd070"/><path d="M8 6l12-3 3 14-14 5z" fill="#78bce8"/><path d="M14 8l14-3 4 16-16 4-3-4z" fill="#f8e468" stroke="#d0b030" stroke-width=".5"/></svg></a>
      <a href="#" class="open current" aria-label="SolidWorks"><svg width="31" height="31" viewBox="0 0 31 31"><path d="M0 6l17-6 14 5-15 7z" fill="#e85048"/><path d="M0 6l16 6v19L1 24z" fill="#b81418"/><path d="M16 12l15-7-1 19-14 7z" fill="#d82020"/><text x="2" y="22" class="sw">S</text><text x="16" y="23" class="sw small">W</text></svg></a>
      <a href="#" class="open" aria-label="WordPad"><svg width="26" height="28" viewBox="0 0 26 28"><path d="M2 1h21v24l3 2H2z" fill="#e4f0fa" stroke="#4878a8"/><path d="M1 1h23v5H1z" fill="#4880b8"/><path d="M15 9h7M15 12h7M15 15h7" stroke="#4878a8"/><path d="M5 20h16M5 23h16" stroke="#9ab"/><text x="4" y="18" class="wp">A</text></svg></a>
    </nav>
    <div class="tray">
      <svg class="more" width="10" height="7" viewBox="0 0 10 7"><path d="M5 .5L9 6H1z" fill="#fff" stroke="#665" stroke-width=".7"/></svg>
      <svg width="16" height="16" viewBox="0 0 16 16"><path d="M1.500 0v15.500M2 1.500h5l1 1.500h5v7H8L7 8.500H2z" fill="#fff" stroke="#554" stroke-width=".8"/><circle cx="10.500" cy="10.500" r="5" fill="#d82c2c"/><path d="M8.500 8.500l4 4M12.500 8.500l-4 4" stroke="#fff" stroke-width="1.500"/></svg>
      <svg width="16" height="16" viewBox="0 0 16 16"><path d="M.5 4h5v4L4 9.500V15H2V9.500L.5 8zM1.500 1v3M4.500 1v3" fill="#fff" stroke="#665" stroke-width=".6"/><path d="M1.500 1v3M4.500 1v3" stroke="#fff"/><path d="M8.500 2.500h6v12h-6z" fill="none" stroke="#fff" stroke-width="1.500"/><path d="M10 5h3v8h-3z" fill="#fff" opacity=".4"/></svg>
      <svg width="16" height="16" viewBox="0 0 16 16"><path d="M0 11h2v3H0zM3 9h2v5H3zM6 7h2v7H6zM9 4h2v10H9zM12 1h2.500v13H12z" fill="#fff"/><path d="M11.500 6l4 9h-8z" fill="#f8c020" stroke="#8a6000" stroke-width=".6"/><path d="M11.500 9v3M11.500 13v1" stroke="#222"/></svg>
      <svg width="14" height="14" viewBox="0 0 14 14"><path d="M1 4h3l4-4v14l-4-4H1z" fill="#fff" stroke="#665" stroke-width=".5"/><path d="M10 4q2 3 0 6M12 3q2 4 0 8" fill="none" stroke="#fff" stroke-width=".9"/></svg>
      <span class="lang">ENG<br>INTL</span>
      <time>15:11<br>02-12-2015</time>
    </div>
  </footer>

</body>
</html>
```

FILE: styles.css
```css
* {
  box-sizing: border-box;
}
body {
  margin: 0;
  min-height: 100vh;
  display: flex;
  flex-direction: column;
  font-family: 'Noto Sans', sans-serif;
  font-size: 11px;
  color: #1a1a1a;
  background: #d8dbe0;
  overflow: hidden;
}
button {
  font: inherit;
  color: inherit;
  background: none;
  border: none;
  padding: 0;
}
a {
  color: inherit;
  text-decoration: none;
}
svg {
  display: block;
  flex: none;
}
h2, p {
  margin: 0;
}
.defs {
  position: absolute;
  width: 0;
  height: 0;
}
.arrow {
  flex: none;
  border: 3px solid transparent;
  border-top-color: #444;
  border-bottom: none;
  width: 6px;
  height: 3px;
}
.arrow.pale {
  border-top-color: #b4b6ba;
}
.arrow.big {
  border-width: 4px;
  border-bottom: none;
  border-top-color: #111;
  width: 8px;
  height: 4px;
}
.arrow.up {
  border-top: none;
  border-bottom: 3px solid #333;
}

/* Title bar */
.titlebar {
  display: flex;
  align-items: center;
  height: 30px;
  background: #d8dbe0;
  border-top: 1px solid #c6d2d4;
  border-bottom: 2px solid #16161a;
}
.logo {
  align-self: stretch;
  width: 131px;
  display: flex;
  align-items: center;
  gap: 2px;
  padding-left: 4px;
  border-left: 5px solid #dd2a1c;
  background: linear-gradient(#3c4850, #20282e);
  color: #fff;
}
.brand {
  font-family: 'Open Sans', sans-serif;
  font-size: 14px;
  font-style: italic;
}
.menu {
  align-self: stretch;
  display: flex;
  align-items: center;
  gap: 16px;
  padding: 0 6px 0 18px;
  background: #abadb1;
  border-right: 2px solid #8c8e92;
}
.menu .pin {
  margin-left: -2px;
}
.quick {
  display: flex;
  align-items: center;
  gap: 6px;
  padding-left: 6px;
}
.quick .arrow {
  margin-right: 2px;
}
.quick .wide {
  padding: 0 1px;
}
.quick .pick {
  width: 22px;
  height: 23px;
  display: flex;
  align-items: center;
  justify-content: center;
  background: #c3c6cb;
  border: 1px solid #5a5c60;
}
.quick .pick-more {
  width: 14px;
  height: 23px;
  margin-left: -7px;
  display: flex;
  align-items: center;
  justify-content: center;
  border: 1px solid #808286;
}
.quick .pick-more .arrow {
  margin: 0;
}
.doc-title {
  flex: 1;
  text-align: center;
  color: #444;
}
.search {
  width: 201px;
  height: 23px;
  display: flex;
  align-items: center;
  gap: 6px;
  padding: 0 3px 0 5px;
  border: 1px solid #16161a;
  background: #ebedf0;
}
.search input {
  flex: 1;
  min-width: 0;
  border: none;
  padding: 0;
  background: none;
  font: inherit;
  color: #555;
}
.window-controls {
  display: flex;
  align-items: center;
  gap: 8px;
  padding: 0 4px 0 10px;
}

/* Command manager */
.ribbon {
  display: flex;
  align-items: flex-start;
  height: 76px;
  padding: 1px 0 0 3px;
  border-bottom: 1px solid #16161a;
}
.ribbon hr {
  width: 1px;
  height: 65px;
  margin: 2px 1px 0 0;
  border: none;
  background: #6a6c70;
}
.tool {
  padding: 12px 5px 0;
  line-height: 13px;
  text-align: center;
}
.tool svg {
  margin: 0 auto 1px;
}
.tool:disabled {
  color: #8c8e92;
}
.tool.drop {
  padding-top: 5px;
}
.tool.drop::after {
  content: "";
  display: block;
  width: 6px;
  margin: 12px auto 0;
  border: 3px solid transparent;
  border-top-color: #333;
  border-bottom: none;
}
.tool.pressed {
  padding: 11px 4px 27px;
  background: #b4b7bc;
  border: 1px solid #5c5e62;
}
.gray {
  color: #c8cacd;
}
.white {
  color: #f2f2f2;
}

/* Work area */
main {
  flex: 1;
  display: flex;
}
.workspace {
  flex: 1;
  display: flex;
  flex-direction: column;
  border-right: 2px solid #8c8f94;
}
.viewport {
  flex: 1;
  display: flex;
  align-items: center;
  justify-content: center;
  position: relative;
  background: #fff;
}
.command-tabs {
  position: absolute;
  left: 0;
  top: 0;
  display: flex;
  align-items: flex-start;
}
.command-tabs button {
  height: 19px;
  min-width: 57px;
  padding: 0 8px 2px 7px;
  background: #a9abaf;
  border: 1px solid #16161a;
  border-width: 0 1px 2px 0;
}
.command-tabs .active {
  width: 68px;
  height: 21px;
  background: #d8dbe0;
  border-width: 0 1px 1px;
}
.isolate {
  position: absolute;
  left: 4px;
  top: 3px;
  width: 174px;
  padding: 5px 6px 6px;
  background: #ebebeb;
  border: 1px solid #d0d0d0;
}
.isolate h2 {
  font-size: 14px;
  font-weight: normal;
  line-height: 20px;
  text-align: center;
  color: #333;
}
.isolate-row {
  display: flex;
  align-items: center;
  gap: 6px;
  height: 32px;
  margin-top: 4px;
  padding: 0 3px 0 7px;
  border: 1px solid #dcdcdc;
  background: #f0f0f0;
}
.isolate-row button {
  flex: 1;
  height: 24px;
  margin-left: 7px;
  padding-bottom: 2px;
  border: 1px solid #9c9c9c;
  background: linear-gradient(#f2f2f2, #e4e4e4);
  color: #000;
}
.heads-up {
  position: absolute;
  left: 0;
  right: 0;
  top: 5px;
  display: flex;
  align-items: center;
  justify-content: center;
  gap: 7px;
}
.heads-up .arrow {
  margin-right: 1px;
}
.view-controls {
  position: absolute;
  right: 9px;
  top: 6px;
  display: flex;
  align-items: center;
  gap: 9px;
}
.tree-handle {
  position: absolute;
  left: 0;
  top: 274px;
  width: 7px;
  height: 39px;
  display: flex;
  flex-direction: column;
  align-items: flex-start;
  justify-content: center;
  gap: 3px;
  border: 1px solid #16161a;
  border-left: none;
  background: #e4e6ea;
}
.tree-handle i {
  border: 3px solid transparent;
  border-left-color: #333;
  border-right: none;
  margin-left: 1px;
}
.triad {
  position: absolute;
  left: 30px;
  bottom: 46px;
}
.pane-tabs {
  position: absolute;
  right: -3px;
  top: 59px;
  z-index: 1;
  width: 26px;
  border: 1px solid #16161a;
  border-top: none;
}
.pane-tabs button {
  width: 24px;
  height: 24px;
  display: flex;
  align-items: center;
  justify-content: center;
  padding-bottom: 2px;
  background: #a9abaf;
  border-top: 1px solid #16161a;
}
.pane-tabs .active {
  background: #e4e6ea;
}

/* Model / motion study tabs */
.sheet-tabs {
  display: flex;
  height: 15px;
  padding-left: 2px;
  border-top: 1px solid #000;
  background: #e3e6eb;
}
.nav {
  width: 15px;
  margin-right: 1px;
  display: flex;
  align-items: center;
  justify-content: center;
  background: #b6b8bb;
  border: 1px solid #96989c;
}
.nav path {
  fill: #8c8e92;
  stroke: #8c8e92;
}
.sheet {
  height: 14px;
  padding: 0 15px 2px 9px;
  line-height: 11px;
  background: #aeb0b3;
  border: 1px solid #16161a;
  border-top: none;
}
.sheet.active {
  margin-left: 2px;
  padding: 0 11px 2px 10px;
  font-weight: bold;
  background: #e8eaee;
  border-right: none;
}

/* Task pane */
.forum {
  width: 261px;
  display: flex;
  flex-direction: column;
  border-left: 2px solid #16161a;
  background: #fff;
}
.forum-head {
  display: flex;
  align-items: center;
  height: 19px;
  padding: 0 2px 0 8px;
  background: #a9abaf;
  border-bottom: 1px solid #16161a;
}
.forum-head h2 {
  flex: 1;
  font-size: 11px;
  line-height: 16px;
  text-align: center;
}
.forum-body {
  flex: 1;
  display: flex;
  margin: 2px 0 0 2px;
  border: 1px solid #ececec;
  border-right: none;
}
.forum-text {
  flex: 1;
  padding: 16px 24px 0;
  text-align: center;
  font-family: 'Liberation Serif', serif;
  font-size: 15px;
  line-height: 19px;
  color: #3465a4;
}
.forum-text p {
  margin-bottom: 19px;
}
.forum-text button {
  width: 46px;
  height: 24px;
  border: 1px solid #767676;
  background: #e2e2e2;
  font-family: 'Liberation Sans', sans-serif;
  font-size: 13px;
  color: #3a62a0;
}
.scroll {
  width: 17px;
  display: flex;
  flex-direction: column;
  align-items: center;
  justify-content: space-between;
  padding: 17px 0;
  background: #f6f6f6;
}
.forum-foot {
  height: 25px;
  margin-left: 2px;
  background: #efefef;
  border-top: 1px solid #8a8a8a;
  border-bottom: 1px solid #a8a8a8;
}

/* Status bar */
.statusbar {
  display: flex;
  align-items: center;
  height: 19px;
  padding: 0 7px 0 2px;
  border-top: 1px solid #16161a;
  color: #000;
}
.edition {
  flex: 1;
}
.mode {
  margin: 0 56px 0 18px;
}
.statusbar .arrow {
  margin: 0 20px 0 17px;
}
.help {
  margin-right: 50px;
}

/* Windows taskbar */
.taskbar {
  display: flex;
  justify-content: space-between;
  height: 40px;
  position: relative;
  color: #fff;
}
.wallpaper {
  position: absolute;
  width: 100%;
  height: 100%;
}
.apps, .tray {
  position: relative;
  display: flex;
  align-items: center;
}
.apps {
  gap: 4px;
}
.apps a {
  width: 58px;
  height: 40px;
  display: flex;
  align-items: center;
  justify-content: center;
}
.apps a:first-child {
  width: 48px;
}
.apps .open {
  border: 1px solid rgba(255, 240, 200, 0.5);
  background: rgba(255, 240, 210, 0.2);
}
.apps .current {
  border-color: rgba(255, 250, 230, 0.9);
  background: rgba(255, 245, 225, 0.45);
}
.apps .stack {
  padding-right: 6px;
  border-right: 4px double rgba(255, 240, 200, 0.6);
}
.sw {
  font: bold 15px 'Liberation Sans', sans-serif;
  fill: #fff;
}
.sw.small {
  font-size: 13px;
}
.wp {
  font: bold 15px 'Liberation Serif', serif;
  fill: #e07820;
}
.tray {
  gap: 9px;
  padding-right: 18px;
  text-align: center;
  line-height: 17px;
}
.tray .more {
  margin-right: 1px;
}
.tray .lang {
  margin: 0 7px;
}
```
